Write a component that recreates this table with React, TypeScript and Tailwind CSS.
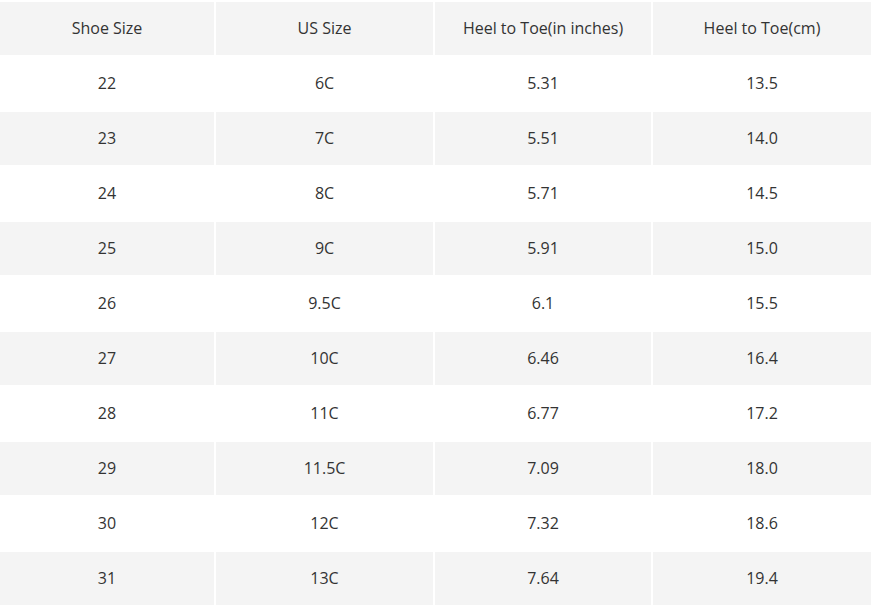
const headers = ['Shoe Size', 'US Size', 'Heel to Toe(in inches)', 'Heel to Toe(cm)']

const rows = [
  ['22', '6C', '5.31', '13.5'],
  ['23', '7C', '5.51', '14.0'],
  ['24', '8C', '5.71', '14.5'],
  ['25', '9C', '5.91', '15.0'],
  ['26', '9.5C', '6.1', '15.5'],
  ['27', '10C', '6.46', '16.4'],
  ['28', '11C', '6.77', '17.2'],
  ['29', '11.5C', '7.09', '18.0'],
  ['30', '12C', '7.32', '18.6'],
  ['31', '13C', '7.64', '19.4']
]

export default function App() {
  return (
    <div
      className="w-[871px] h-[607px] bg-white pt-[2px] text-[16px] text-[#333333]"
      style={{ fontFamily: '"Open Sans", "Liberation Sans", sans-serif' }}
    >
      <div className="grid grid-cols-[214px_217px_216px_1fr] gap-x-[2px] gap-y-[2px] auto-rows-[53px]">
        {headers.map((h) => (
          <div key={h} className="flex items-center justify-center pb-[2px] bg-[#f4f4f4]">
            {h}
          </div>
        ))}
        {rows.map((row, i) =>
          row.map((cell, j) => (
            <div
              key={`${i}-${j}`}
              className={`flex items-center justify-center pb-[2px] ${i % 2 === 1 ? 'bg-[#f4f4f4]' : 'bg-white'}`}
            >
              {cell}
            </div>
          ))
        )}
      </div>
    </div>
  )
}
